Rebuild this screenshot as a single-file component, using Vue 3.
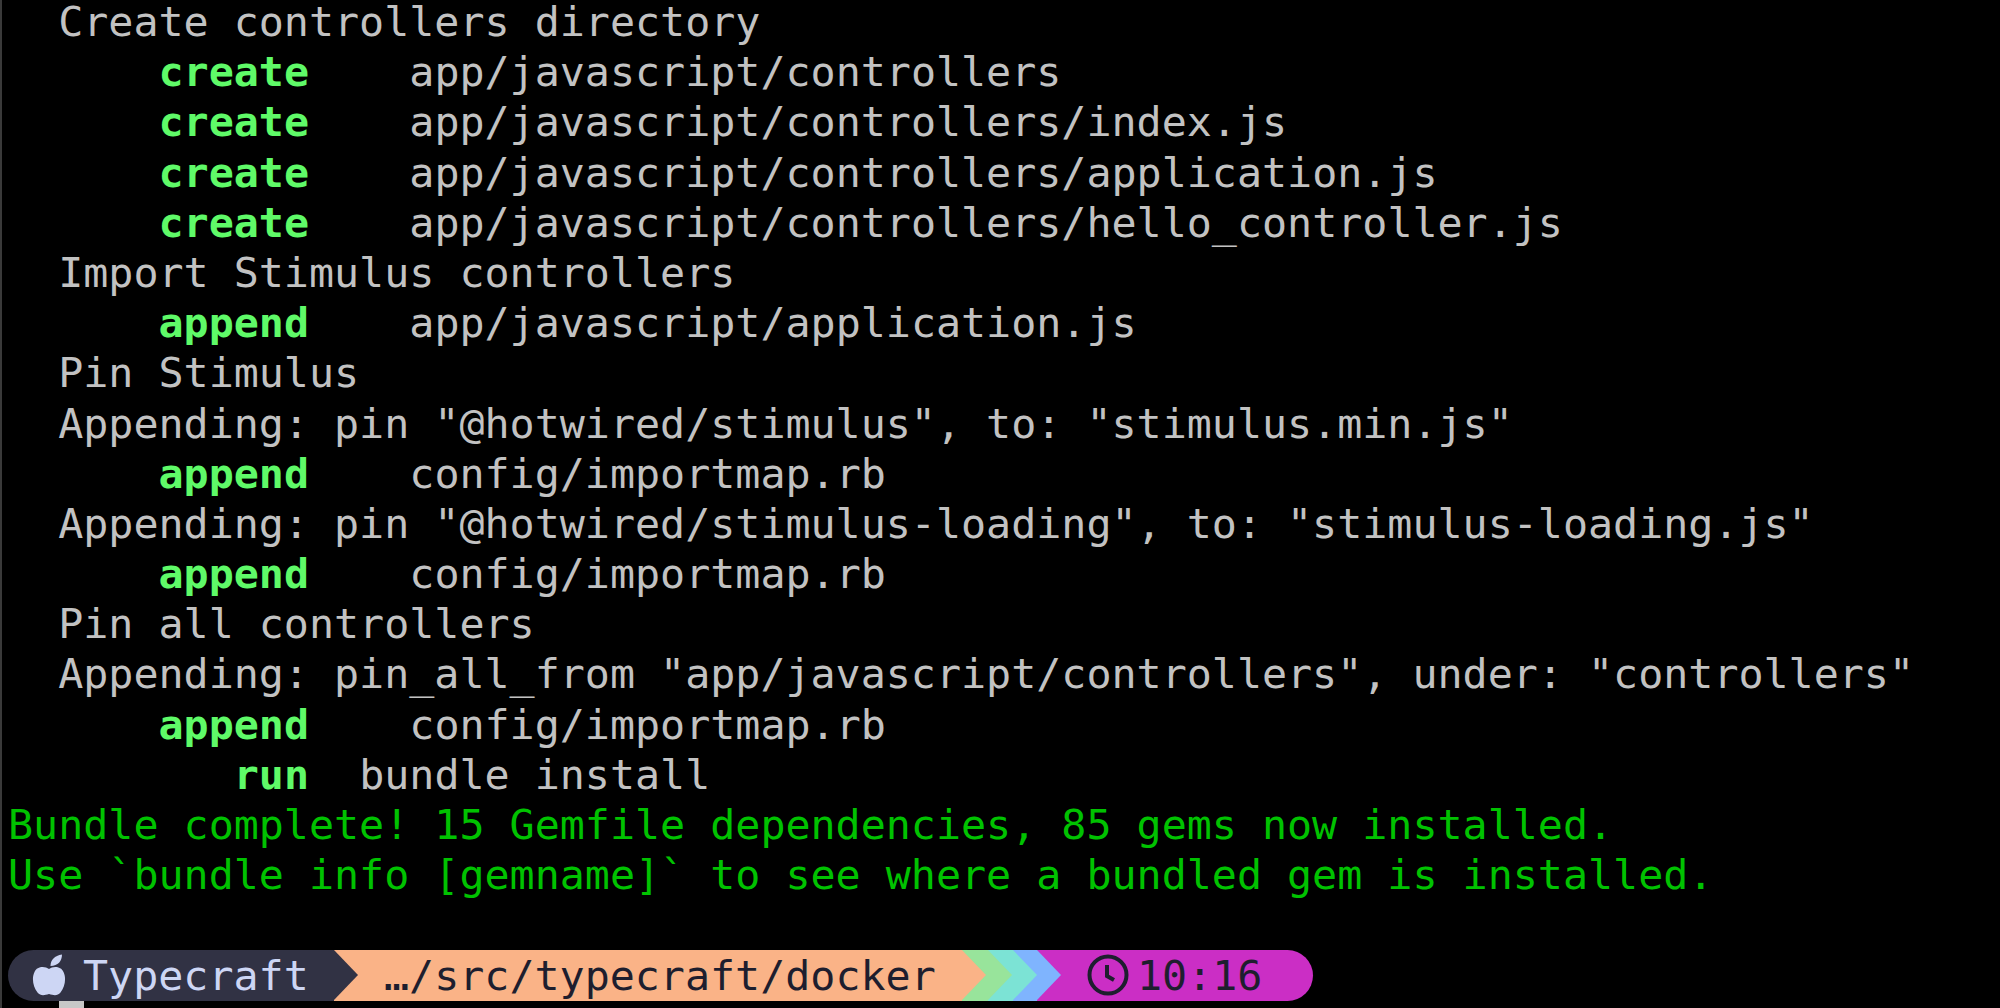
<script setup>
const rows = [
  { t: '  Create controllers directory' },
  { a: 'create', t: 'app/javascript/controllers' },
  { a: 'create', t: 'app/javascript/controllers/index.js' },
  { a: 'create', t: 'app/javascript/controllers/application.js' },
  { a: 'create', t: 'app/javascript/controllers/hello_controller.js' },
  { t: '  Import Stimulus controllers' },
  { a: 'append', t: 'app/javascript/application.js' },
  { t: '  Pin Stimulus' },
  { t: '  Appending: pin "@hotwired/stimulus", to: "stimulus.min.js"' },
  { a: 'append', t: 'config/importmap.rb' },
  { t: '  Appending: pin "@hotwired/stimulus-loading", to: "stimulus-loading.js"' },
  { a: 'append', t: 'config/importmap.rb' },
  { t: '  Pin all controllers' },
  { t: '  Appending: pin_all_from "app/javascript/controllers", under: "controllers"' },
  { a: 'append', t: 'config/importmap.rb' },
  { p: '         ', a: 'run', s: '  ', t: 'bundle install' },
  { t: 'Bundle complete! 15 Gemfile dependencies, 85 gems now installed.', g: true },
  { t: 'Use `bundle info [gemname]` to see where a bundled gem is installed.', g: true },
  { t: ' ' }
]
</script>

<template>
  <div class="term">
    <div
      v-for="(r, i) in rows"
      :key="i"
      class="row"
      :class="{ ok: r.g }"
    ><template v-if="r.a"><span>{{ r.p ?? '      ' }}</span><b class="act">{{ r.a }}</b><span>{{ r.s ?? '    ' }}</span></template>{{ r.t }}</div>

    <div class="status">
      <div class="seg dark">
        <svg class="apple" viewBox="0 0 34 42" width="34" height="42">
          <path d="M17 15C13 12 5 12 2.500 18C-0.500 24 1 33 5.500 38.500C8.500 42 12 41.500 17 40C22 41.500 25.500 42 28.500 38.500C33 33 34.500 24 31.500 18C29 12 21 12 17 15Z" fill="#cdd6f4" />
          <path d="M18.500 12C18.500 6 22.500 1.500 30 0.500C30 7 26 12 18.500 12Z" fill="#cdd6f4" />
        </svg>
        <span class="label">Typecraft</span>
      </div>
      <div class="seg orange"><span class="label">…/src/typecraft/docker</span></div>
      <div class="seg green"></div>
      <div class="seg teal"></div>
      <div class="seg blue"></div>
      <div class="seg purple">
        <svg class="clock" viewBox="0 0 42 42" width="42" height="42">
          <circle cx="21" cy="21" r="18.500" fill="none" stroke="#1e1e2e" stroke-width="4" />
          <path d="M20 11V22L27 26" fill="none" stroke="#1e1e2e" stroke-width="4" />
        </svg>
        <span class="label">10:16</span>
      </div>
    </div>
    <div class="cursor"></div>
  </div>
</template>

<style>
html, body { margin: 0; background: #000; overflow: hidden; }
</style>

<style scoped>
.term {
  box-sizing: border-box;
  height: 1011px;
  overflow: hidden;
  background: #000;
  border-left: 2px solid #3a3a3a;
  padding: 0 0 0 6px;
  margin-top: -3px;
  color: #c2c2c2;
  font-family: "DejaVu Sans Mono", monospace;
  font-size: 41.67px;
  line-height: 50.2px;
  white-space: pre;
}
.row { height: 50.2px; }
.ok { color: #00c200; }
.act { color: #5ffa68; font-weight: 700; }
.status { display: flex; height: 50.2px; margin-top: -1px; color: #1e1e2e; }
.seg { position: relative; display: flex; align-items: center; height: 51px; box-sizing: border-box; }
.seg::after {
  content: "";
  position: absolute;
  left: 100%;
  top: 0;
  border-top: 25.5px solid transparent;
  border-bottom: 25.5px solid transparent;
  border-left: 24px solid var(--c);
}
.dark { --c: #313244; background: var(--c); width: 326px; color: #cdd6f4; border-radius: 25.5px 0 0 25.5px; padding-left: 24px; z-index: 6; }
.orange { --c: #fab387; background: var(--c); width: 628px; padding-left: 50px; z-index: 5; }
.green { --c: #98e49b; background: var(--c); width: 26px; z-index: 4; }
.teal { --c: #7ce3d5; background: var(--c); width: 25px; z-index: 3; }
.blue { --c: #7fb4fe; background: var(--c); width: 24px; z-index: 2; }
.purple { --c: #cb2ec5; background: var(--c); width: 276px; border-radius: 0 25.5px 25.5px 0; padding-left: 50px; z-index: 1; }
.purple::after { display: none; }
.apple { flex: none; margin-right: 17px; }
.clock { flex: none; margin-right: 8px; }
.label { line-height: 51px; }
.cursor { width: 25px; height: 10px; margin-left: 51px; background: #c7c7c7; }
</style>
